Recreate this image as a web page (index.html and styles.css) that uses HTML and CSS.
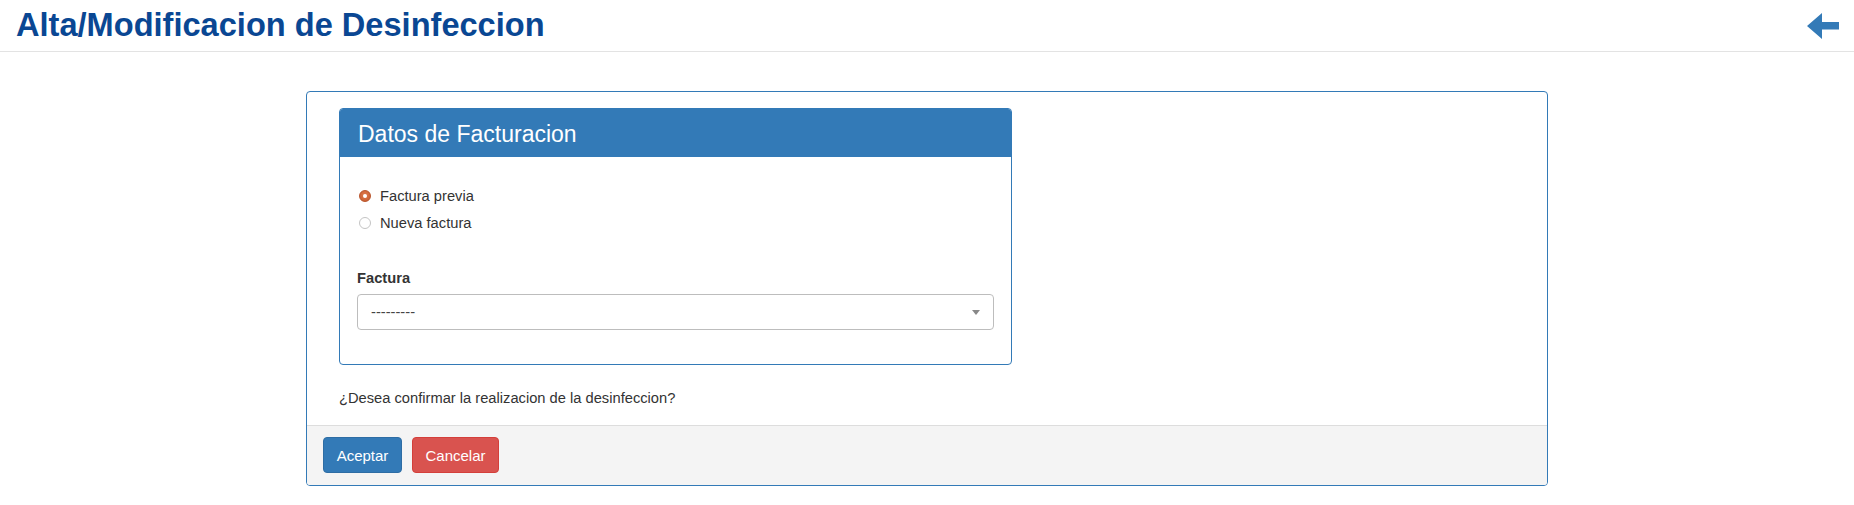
FILE: index.html
```html
<!DOCTYPE html>
<html lang="es">
<head>
<meta charset="utf-8">
<title>Alta/Modificacion de Desinfeccion</title>
<link rel="stylesheet" href="styles.css">
</head>
<body>
<header class="page-header">
  <h1 class="page-title">Alta/Modificacion de Desinfeccion</h1>
  <a class="back-link" href="#" aria-label="Volver">
    <svg class="back-icon" width="32" height="26" viewBox="0 0 32 26"><polygon points="0,13 15,0 15,9 32,9 32,16.5 15,16.5 15,26" fill="#337ab7"/></svg>
  </a>
</header>
<main class="main">
  <section class="outer-panel">
    <div class="outer-body">
      <div class="inner-panel">
        <div class="inner-heading">Datos de Facturacion</div>
        <div class="inner-body">
          <div class="radio-group">
            <label class="radio-row"><span class="radio checked"></span>Factura previa</label>
            <label class="radio-row"><span class="radio"></span>Nueva factura</label>
          </div>
          <div class="field">
            <div class="field-label">Factura</div>
            <div class="select">
              <span class="select-value">---------</span>
              <span class="select-arrow"></span>
            </div>
          </div>
        </div>
      </div>
      <p class="confirm">¿Desea confirmar la realizacion de la desinfeccion?</p>
    </div>
    <div class="outer-footer">
      <button class="btn btn-primary">Aceptar</button>
      <button class="btn btn-danger">Cancelar</button>
    </div>
  </section>
</main>
</body>
</html>
```
FILE: styles.css
```css
* { box-sizing: border-box; }
html, body { margin: 0; padding: 0; background: #fff; }
body {
  font-family: "Liberation Sans", Arial, sans-serif;
  font-size: 14.7px;
  color: #333;
}
.page-header {
  height: 52px;
  border-bottom: 1px solid #e3e3e3;
  display: flex;
  align-items: center;
  justify-content: space-between;
  padding: 0 15px 0 16px;
}
.page-title {
  margin: 0;
  font-size: 32.6px;
  font-weight: bold;
  color: #0a4793;
  line-height: 1;
}
.back-link { display: flex; }
.back-icon { display: block; }
.main { padding-top: 39px; }
.outer-panel {
  width: 1242px;
  margin: 0 auto;
  border: 1px solid #337ab7;
  border-radius: 4px;
  overflow: hidden;
}
.outer-body { padding: 16px 32px 0 32px; }
.inner-panel {
  width: 673px;
  border: 1px solid #337ab7;
  border-radius: 4px;
  overflow: hidden;
}
.inner-heading {
  background: #337ab7;
  color: #fff;
  height: 48px;
  line-height: 50px;
  padding: 0 18px;
  font-size: 23px;
  overflow: hidden;
}
.inner-body { padding: 29px 17px 34px 17px; }
.radio-group { display: flex; flex-direction: column; gap: 7px; }
.radio-row {
  display: flex;
  align-items: center;
  height: 20px;
  line-height: 20px;
  gap: 9px;
}
.radio {
  width: 12px;
  height: 12px;
  margin-left: 2px;
  border-radius: 50%;
  border: 1px solid #c4c4c4;
  background: #fff;
  display: flex;
  align-items: center;
  justify-content: center;
}
.radio.checked {
  border-color: #b9532a;
  background: radial-gradient(circle at 50% 40%, #e07a4c, #c45a2e);
}
.radio.checked::after {
  content: "";
  width: 4px;
  height: 4px;
  border-radius: 50%;
  background: #fff;
}
.field { margin-top: 35px; }
.field-label {
  font-weight: bold;
  height: 20px;
  line-height: 20px;
  margin-bottom: 6px;
}
.select {
  height: 36px;
  border: 1px solid #bdbdbd;
  border-radius: 4px;
  display: flex;
  align-items: center;
  justify-content: space-between;
  padding: 0 13px 0 13px;
}
.select-value { color: #444; }
.select-arrow {
  width: 0;
  height: 0;
  border-left: 4px solid transparent;
  border-right: 4px solid transparent;
  border-top: 5px solid #888;
}
.confirm {
  margin: 23px 0 17px 0;
  height: 20px;
  line-height: 20px;
}
.outer-footer {
  background: #f4f4f4;
  border-top: 1px solid #ddd;
  padding: 11px 16px 12px 16px;
  display: flex;
  gap: 10px;
}
.btn {
  height: 36px;
  padding: 0 12px;
  font-family: "Liberation Sans", Arial, sans-serif;
  font-size: 15px;
  color: #fff;
  border-radius: 4px;
  border: 1px solid;
}
.btn-primary { background: #337ab7; border-color: #2e6da4; width: 79px; }
.btn-danger { background: #d9534f; border-color: #d43f3a; width: 87px; }
```
